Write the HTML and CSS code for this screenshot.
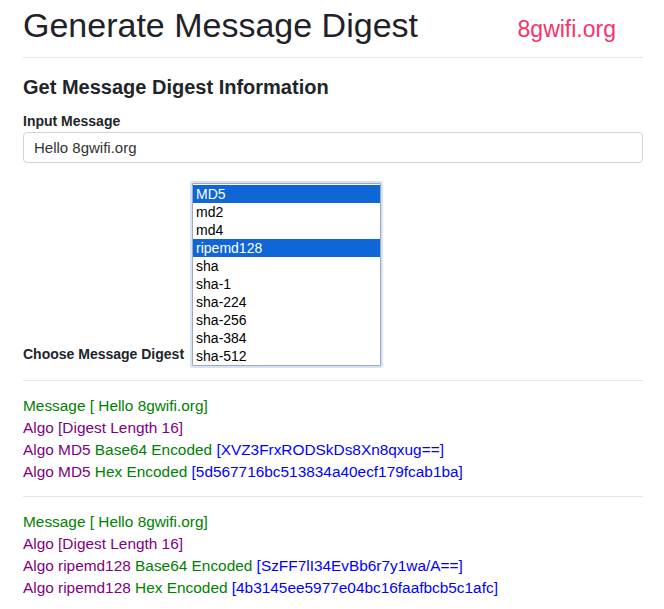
FILE: index.html
```html
<!DOCTYPE html>
<html lang="en">
<head>
<meta charset="utf-8">
<title>Generate Message Digest</title>
<link rel="stylesheet" href="styles.css">
</head>
<body>
<div class="container">
  <header class="header">
    <h1 class="title">Generate Message Digest</h1>
    <span class="brand">8gwifi.org</span>
  </header>
  <hr class="rule">
  <h4 class="subtitle">Get Message Digest Information</h4>
  <label class="label" for="msg">Input Message</label>
  <div class="input" id="msg">Hello 8gwifi.org</div>
  <div class="choose-row">
    <span class="label choose-label">Choose Message Digest</span>
    <div class="listbox" role="listbox" aria-multiselectable="true">
      <div class="option selected" role="option">MD5</div>
      <div class="option" role="option">md2</div>
      <div class="option" role="option">md4</div>
      <div class="option selected" role="option">ripemd128</div>
      <div class="option" role="option">sha</div>
      <div class="option" role="option">sha-1</div>
      <div class="option" role="option">sha-224</div>
      <div class="option" role="option">sha-256</div>
      <div class="option" role="option">sha-384</div>
      <div class="option" role="option">sha-512</div>
    </div>
  </div>
  <hr class="rule rule-out">
  <div class="result">
    <div class="g">Message [ Hello 8gwifi.org]</div>
    <div class="p">Algo [Digest Length 16]</div>
    <div><span class="p">Algo MD5</span> <span class="g">Base64 Encoded</span> <span class="b">[XVZ3FrxRODSkDs8Xn8qxug==]</span></div>
    <div><span class="p">Algo MD5</span> <span class="g">Hex Encoded</span> <span class="b">[5d567716bc513834a40ecf179fcab1ba]</span></div>
  </div>
  <hr class="rule rule-mid">
  <div class="result">
    <div class="g">Message [ Hello 8gwifi.org]</div>
    <div class="p">Algo [Digest Length 16]</div>
    <div><span class="p">Algo ripemd128</span> <span class="g">Base64 Encoded</span> <span class="b">[SzFF7lI34EvBb6r7y1wa/A==]</span></div>
    <div><span class="p">Algo ripemd128</span> <span class="g">Hex Encoded</span> <span class="b">[4b3145ee5977e04bc16faafbcb5c1afc]</span></div>
  </div>
</div>
</body>
</html>
```

FILE: styles.css
```css
* { box-sizing: border-box; }
html, body { margin: 0; padding: 0; background: #fff; }
body {
  font-family: "Liberation Sans", Arial, sans-serif;
  color: #212529;
  font-size: 14px;
}
.container {
  width: 643px;
  padding: 5px 0 0 23px;
}
.header {
  display: flex;
  align-items: baseline;
  justify-content: space-between;
  padding-right: 27px;
}
.title {
  margin: 0;
  font-size: 34px;
  line-height: 41px;
  font-weight: 400;
  color: #1f2226;
}
.brand {
  font-size: 23px;
  color: #f8326c;
}
.rule {
  margin: 11px 0 0;
  border: 0;
  border-top: 1px solid #e6e6e6;
  height: 0;
}
.subtitle {
  margin: 17px 0 0;
  font-size: 20px;
  line-height: 24px;
  font-weight: 700;
}
.label {
  display: block;
  margin-top: 12px;
  font-weight: 700;
  font-size: 14px;
  line-height: 21px;
}
.input {
  height: 31px;
  border: 1px solid #ced4da;
  border-radius: 4px;
  padding: 0 10px;
  font-size: 15px;
  line-height: 29px;
  color: #333;
}
.choose-row {
  display: flex;
  align-items: flex-end;
  gap: 8px;
  margin-top: 20px;
}
.choose-label {
  margin: 0;
  line-height: 21px;
  position: relative;
  top: -1px;
}
.listbox {
  width: 189px;
  border: 1px solid #a3a9b3;
  padding: 1px 0 0;
  box-shadow: 0 0 0 2px #d4e3f8;
  border-radius: 1px;
  background: #fff;
}
.option {
  height: 18px;
  line-height: 18px;
  padding: 0 3px;
  font-size: 14px;
  color: #000;
}
.option.selected {
  background: #0f66d6;
  color: #fff;
}
.rule-out { margin-top: 14px; }
.rule-mid { margin-top: 13px; }
.result {
  margin-top: 14px;
  font-size: 15.4px;
  line-height: 22px;
}
.g { color: #008000; }
.p { color: #800080; }
.b { color: #0000ff; }
```
